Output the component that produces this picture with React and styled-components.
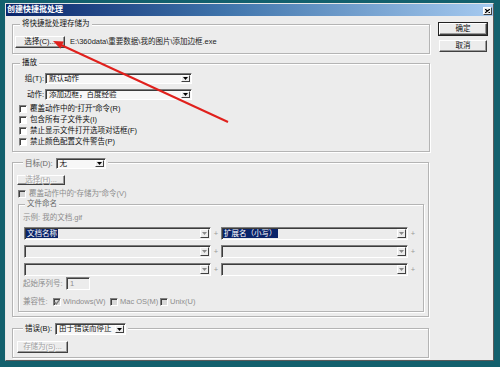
import React from 'react';
import styled, { createGlobalStyle } from 'styled-components';

const Global = createGlobalStyle`
  html, body { margin: 0; padding: 0; background: #13606d; }
  body {
    font-family: "Liberation Sans", "Noto Sans CJK SC", sans-serif;
    font-size: 7.5px;
    line-height: 10px;
    color: #111;
  }
  * { box-sizing: border-box; }
`;

const BG = '#ececec';

const Page = styled.div`
  position: relative;
  width: 500px;
  height: 367px;
  padding: 3px 6px 6px 5px;
  background: #13606d;
`;

const Dialog = styled.div`
  width: 489px;
  height: 358px;
  background: ${BG};
  border: 1px solid;
  border-color: #e6e6e6 #5a5a5a #5a5a5a #e6e6e6;
  display: flex;
  flex-direction: column;
`;

const TitleBar = styled.div`
  height: 12px;
  background: linear-gradient(to right, #0a246a 0%, #3f74ab 45%, #a6caf0 100%);
  display: flex;
  align-items: center;
  justify-content: space-between;
  padding: 0 1px;
`;

const TitleText = styled.span`
  color: #fff;
  font-weight: bold;
  font-size: 8px;
  line-height: 12px;
`;

const CloseBtn = styled.div`
  width: 9px;
  height: 8px;
  margin-top: 2px;
  background: ${BG};
  border: 1px solid;
  border-color: #fff #404040 #404040 #fff;
  display: flex;
  align-items: center;
  justify-content: center;
`;

const Body = styled.div`
  display: flex;
  padding-left: 6px;
`;

const LeftCol = styled.div`
  width: 418px;
  display: flex;
  flex-direction: column;
`;

const RightCol = styled.div`
  margin-left: 9px;
  margin-top: 7px;
  display: flex;
  flex-direction: column;
  gap: 5px;
`;

const Group = styled.div`
  height: ${p => p.$h}px;
  width: ${p => p.$w}px;
  margin-top: ${p => p.$mt}px;
  margin-left: ${p => p.$ml || 0}px;
  padding-left: ${p => p.$pl || 0}px;
  border: 1px solid #b4b4b4;
  box-shadow: 1px 1px 0 #fff, inset 1px 1px 0 #fff;
  display: flex;
  flex-direction: column;
  align-items: flex-start;
`;

const Legend = styled.div`
  display: flex;
  align-items: center;
  gap: 3px;
  height: ${p => p.$h || 10}px;
  margin-top: ${p => p.$mt}px;
  margin-left: ${p => p.$ml}px;
  padding: 0 2px;
  background: ${BG};
  color: ${p => (p.$dim ? '#666' : '#111')};
  white-space: nowrap;
`;

const Button = styled.div`
  width: ${p => p.$w}px;
  height: ${p => p.$h || 12}px;
  margin-top: ${p => p.$mt || 0}px;
  background: ${BG};
  border: 1px solid;
  border-color: #fff #404040 #404040 #fff;
  box-shadow: inset -1px -1px 0 #9a9a9a;
  outline: ${p => (p.$default ? '1px solid #222' : 'none')};
  display: flex;
  align-items: center;
  justify-content: center;
  color: ${p => (p.$disabled ? '#a2a2a2' : '#111')};
  text-shadow: ${p => (p.$disabled ? '1px 1px 0 #fff' : 'none')};
  white-space: nowrap;
  line-height: 10px;
`;

const Row = styled.div`
  display: flex;
  align-items: center;
  height: ${p => p.$h}px;
  margin-top: ${p => p.$mt || 0}px;
  margin-left: ${p => p.$ml || 0}px;
  white-space: nowrap;
  color: ${p => (p.$dim ? '#8c8c8c' : '#111')};
`;

const PathText = styled.span`
  margin-left: 5px;
  color: #222;
`;

const Label = styled.span`
  width: ${p => p.$w}px;
  text-align: ${p => p.$align || 'left'};
  margin-right: ${p => p.$mr || 0}px;
`;

const SelectBox = styled.div`
  width: ${p => p.$w}px;
  height: ${p => p.$h}px;
  background: ${p => p.$bg || '#f7f7f7'};
  border: 1px solid;
  border-color: #7c7c7c #fff #fff #7c7c7c;
  box-shadow: inset 1px 1px 0 #3c3c3c;
  display: flex;
  align-items: stretch;
  padding: 1px;
`;

const SelectValue = styled.div`
  flex: 1;
  display: flex;
  align-items: center;
  padding-left: ${p => (p.$hl ? 0 : 2)}px;
  overflow: hidden;
  color: #111;
`;

const Highlight = styled.span`
  background: #0a246a;
  color: #fff;
  padding: 0 1px;
  line-height: 9px;
`;

const DropBtn = styled.div`
  width: 9px;
  background: ${BG};
  border: 1px solid;
  border-color: #fff #404040 #404040 #fff;
  display: flex;
  align-items: center;
  justify-content: center;
`;

const Plus = styled.span`
  width: 10px;
  text-align: center;
  color: #9a9a9a;
`;

const Check = styled.div`
  width: 8px;
  height: 8px;
  margin-right: ${p => p.$mr ?? 3}px;
  background: ${p => (p.$disabled ? '#d9d9d9' : '#fff')};
  border: 1px solid;
  border-color: #808080 #fff #fff #808080;
  box-shadow: inset 1px 1px 0 #404040;
  display: flex;
  align-items: center;
  justify-content: center;
`;

const NumInput = styled.div`
  width: 24px;
  height: 13px;
  margin-left: 3px;
  border: 1px solid;
  border-color: #808080 #fff #fff #808080;
  box-shadow: inset 1px 1px 0 #404040;
  background: ${BG};
  padding-left: 3px;
  display: flex;
  align-items: center;
  color: #8c8c8c;
`;

const ArrowLayer = styled.svg`
  position: absolute;
  left: 0;
  top: 0;
  pointer-events: none;
`;

const Tri = ({ dim }) => (
  <svg width="5" height="3" viewBox="0 0 5 3">
    <polygon points="0,0 5,0 2.5,3" fill={dim ? '#8a8a8a' : '#000'} />
  </svg>
);

const CheckMark = ({ color }) => (
  <svg width="6" height="6" viewBox="0 0 6 6">
    <polyline points="0.5,3 2.3,5 5.5,0.8" fill="none" stroke={color} strokeWidth="1.3" />
  </svg>
);

const Select = ({ w, h, value, hl, bg, dim }) => (
  <SelectBox $w={w} $h={h} $bg={bg}>
    <SelectValue $hl={hl}>{hl ? <Highlight>{value}</Highlight> : value}</SelectValue>
    <DropBtn>
      <Tri dim={dim} />
    </DropBtn>
  </SelectBox>
);

const CheckRow = ({ children, ml, mt, h, disabled, dim }) => (
  <Row $h={h} $mt={mt} $ml={ml} $dim={dim}>
    <Check $disabled={disabled} />
    {children}
  </Row>
);

const NameRow = ({ mt, left, right }) => (
  <Row $h={13} $mt={mt} $ml={1}>
    <Select w={187} h={13} bg={BG} value={left} hl={!!left} dim />
    <Plus>+</Plus>
    <Select w={187} h={13} bg={BG} value={right} hl={!!right} dim />
    <Plus>+</Plus>
  </Row>
);

export default function App() {
  return (
    <Page>
      <Global />
      <Dialog>
        <TitleBar>
          <TitleText>创建快捷批处理</TitleText>
          <CloseBtn>
            <svg width="5" height="4" viewBox="0 0 5 4">
              <path d="M0 0 L5 4 M5 0 L0 4" stroke="#000" strokeWidth="1.2" />
            </svg>
          </CloseBtn>
        </TitleBar>
        <Body>
          <LeftCol>
            <Group $h={30} $w={418} $mt={8} $pl={2}>
              <Legend $mt={-6} $ml={5}>将快捷批处理存储为</Legend>
              <Row $h={12} $mt={7}>
                <Button $w={50}>选择(C)...</Button>
                <PathText>E:\360data\重要数据\我的图片\添加边框.exe</PathText>
              </Row>
            </Group>

            <Group $h={89} $w={418} $mt={9} $pl={2}>
              <Legend $mt={-6} $ml={5}>播放</Legend>
              <Row $h={11} $mt={5}>
                <Label $w={29} $align="right" $mr={1}>组(T):</Label>
                <Select w={147} h={11} value="默认动作" />
              </Row>
              <Row $h={11} $mt={5}>
                <Label $w={29} $align="right" $mr={1}>动作:</Label>
                <Select w={147} h={11} value="添加边框，百度经验" />
              </Row>
              <CheckRow h={11} mt={3} ml={4}>覆盖动作中的“打开”命令(R)</CheckRow>
              <CheckRow h={11} ml={4}>包含所有子文件夹(I)</CheckRow>
              <CheckRow h={11} ml={4}>禁止显示文件打开选项对话框(F)</CheckRow>
              <CheckRow h={11} ml={4}>禁止颜色配置文件警告(P)</CheckRow>
            </Group>

            <Group $h={155} $w={417} $mt={10} $pl={4}>
              <Legend $mt={-5} $ml={6} $h={11} $dim>
                <span>目标(D):</span>
                <Select w={50} h={11} value="无" />
              </Legend>
              <Button $w={48} $h={10} $mt={6} $disabled>选择(H)...</Button>
              <CheckRow h={10} mt={4} ml={1} disabled dim>覆盖动作中的“存储为”命令(V)</CheckRow>

              <Group $h={108} $w={406} $mt={5} $ml={1} $pl={4}>
                <Legend $mt={-6} $ml={2} $dim>文件命名</Legend>
                <Row $h={10} $mt={4} $dim>示例: 我的文档.gif</Row>
                <NameRow mt={4} left="文档名称" right="扩展名（小写）" />
                <NameRow mt={5} />
                <NameRow mt={5} />
                <Row $h={13} $mt={1} $dim>
                  <Label $w={40}>起始序列号:</Label>
                  <NumInput>1</NumInput>
                </Row>
                <Row $h={10} $mt={7} $dim>
                  <Label $w={30}>兼容性:</Label>
                  <Check $disabled $mr={2}>
                    <CheckMark color="#7a7a7a" />
                  </Check>
                  <Label $w={47}>Windows(W)</Label>
                  <Check $disabled $mr={2} />
                  <Label $w={40}>Mac OS(M)</Label>
                  <Check $disabled $mr={2} />
                  <Label $w={30}>Unix(U)</Label>
                </Row>
              </Group>
            </Group>

            <Group $h={30} $w={417} $mt={11} $pl={4}>
              <Legend $mt={-6} $ml={6} $h={12}>
                <span>错误(B):</span>
                <Select w={71} h={12} value="由于错误而停止" />
              </Legend>
              <Button $w={51} $h={12} $mt={6} $disabled>存储为(S)...</Button>
            </Group>
          </LeftCol>

          <RightCol>
            <Button $w={48} $default>确定</Button>
            <Button $w={48}>取消</Button>
          </RightCol>
        </Body>
      </Dialog>

      <ArrowLayer width="500" height="367" viewBox="0 0 500 367">
        <line x1="228" y1="122" x2="60" y2="44.5" stroke="#e0201c" strokeWidth="2" />
        <polygon points="53,41 63.8,41.5 60.4,48.8" fill="#e0201c" />
      </ArrowLayer>
    </Page>
  );
}
